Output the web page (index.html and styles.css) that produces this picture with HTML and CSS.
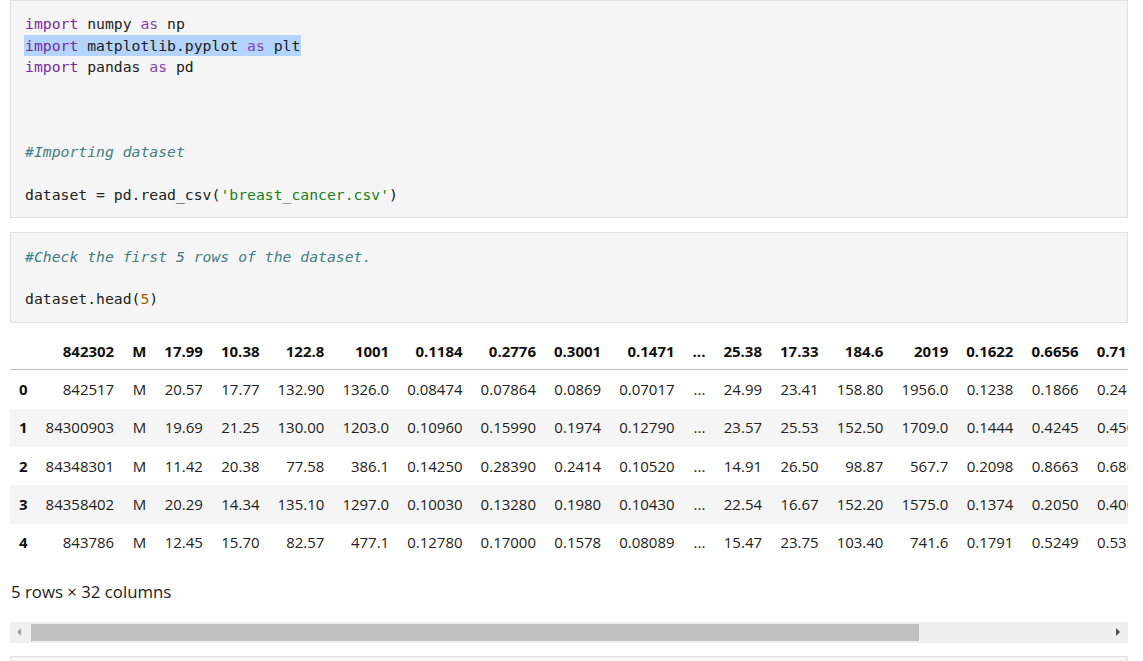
FILE: index.html
```html
<!DOCTYPE html>
<html>
<head>
<meta charset="utf-8">
<link rel="stylesheet" href="styles.css">
</head>
<body>
<div class="page">
  <div class="cell">
<pre class="code"><span class="kw">import</span> numpy <span class="kw2">as</span> np
<span class="sel"><span class="kw">import</span> matplotlib.pyplot <span class="kw2">as</span> plt</span>
<span class="kw">import</span> pandas <span class="kw2">as</span> pd



<span class="cm">#Importing dataset</span>

dataset = pd.read_csv(<span class="str">'breast_cancer.csv'</span>)</pre>
  </div>
  <div class="cell cell2">
<pre class="code"><span class="cm">#Check the first 5 rows of the dataset.</span>

dataset.head(<span class="num">5</span>)</pre>
  </div>
  <div class="output">
    <div class="scroll">
      <table class="df">
        <thead>
          <tr><th></th><th>842302</th><th>M</th><th>17.99</th><th>10.38</th><th>122.8</th><th>1001</th><th>0.1184</th><th>0.2776</th><th>0.3001</th><th>0.1471</th><th>...</th><th>25.38</th><th>17.33</th><th>184.6</th><th>2019</th><th>0.1622</th><th>0.6656</th><th>0.7119</th><th>0.2654</th><th>0.4601</th><th>0.1189</th></tr>
        </thead>
        <tbody>
          <tr><th>0</th><td>842517</td><td>M</td><td>20.57</td><td>17.77</td><td>132.90</td><td>1326.0</td><td>0.08474</td><td>0.07864</td><td>0.0869</td><td>0.07017</td><td>...</td><td>24.99</td><td>23.41</td><td>158.80</td><td>1956.0</td><td>0.1238</td><td>0.1866</td><td>0.2416</td><td>0.1860</td><td>0.2750</td><td>0.08902</td></tr>
          <tr><th>1</th><td>84300903</td><td>M</td><td>19.69</td><td>21.25</td><td>130.00</td><td>1203.0</td><td>0.10960</td><td>0.15990</td><td>0.1974</td><td>0.12790</td><td>...</td><td>23.57</td><td>25.53</td><td>152.50</td><td>1709.0</td><td>0.1444</td><td>0.4245</td><td>0.4504</td><td>0.2430</td><td>0.3613</td><td>0.08758</td></tr>
          <tr><th>2</th><td>84348301</td><td>M</td><td>11.42</td><td>20.38</td><td>77.58</td><td>386.1</td><td>0.14250</td><td>0.28390</td><td>0.2414</td><td>0.10520</td><td>...</td><td>14.91</td><td>26.50</td><td>98.87</td><td>567.7</td><td>0.2098</td><td>0.8663</td><td>0.6869</td><td>0.2575</td><td>0.6638</td><td>0.17300</td></tr>
          <tr><th>3</th><td>84358402</td><td>M</td><td>20.29</td><td>14.34</td><td>135.10</td><td>1297.0</td><td>0.10030</td><td>0.13280</td><td>0.1980</td><td>0.10430</td><td>...</td><td>22.54</td><td>16.67</td><td>152.20</td><td>1575.0</td><td>0.1374</td><td>0.2050</td><td>0.4000</td><td>0.1625</td><td>0.2364</td><td>0.07678</td></tr>
          <tr><th>4</th><td>843786</td><td>M</td><td>12.45</td><td>15.70</td><td>82.57</td><td>477.1</td><td>0.12780</td><td>0.17000</td><td>0.1578</td><td>0.08089</td><td>...</td><td>15.47</td><td>23.75</td><td>103.40</td><td>741.6</td><td>0.1791</td><td>0.5249</td><td>0.5355</td><td>0.1741</td><td>0.3985</td><td>0.12440</td></tr>
        </tbody>
      </table>
      <p class="shape">5 rows × 32 columns</p>
    </div>
    <div class="hbar">
      <span class="arrow left"></span>
      <div class="thumb"></div>
      <span class="arrow right"></span>
    </div>
  </div>
  <div class="cell cell3"></div>
</div>
</body>
</html>
```

FILE: styles.css
```css
html, body {
  margin: 0;
  padding: 0;
  background: #ffffff;
  overflow: hidden;
}

.page {
  width: 1118px;
  margin-left: 10px;
}

.cell {
  background: #f5f5f5;
  border: 1px solid #e0e0e0;
  padding: 12.3px 14px 11.5px;
}

.cell2 {
  margin-top: 14px;
  padding-top: 13px;
  padding-bottom: 12.5px;
}

.cell3 {
  margin-top: 13px;
  height: 20px;
  padding: 0;
}

.code {
  margin: 0;
  font-family: "DejaVu Sans Mono", "Liberation Mono", monospace;
  font-size: 14.75px;
  line-height: 21.33px;
  color: #212121;
  white-space: pre;
}

.kw { color: #7928a1; }
.kw2 { color: #8a3fb2; }
.cm { color: #408080; font-style: italic; }
.str { color: #1a7f1a; }
.num { color: #a65a00; }

.sel {
  display: inline-block;
  background: #b3d4fc;
  margin-left: -1px;
  padding: 0 1px;
}

.output {
  margin-top: 11px;
}

.scroll {
  width: 1118px;
  overflow: hidden;
}

.df {
  border-collapse: collapse;
  font-family: "Open Sans", "Noto Sans", sans-serif;
  font-size: 15px;
  color: #222;
  white-space: nowrap;
}

.df th, .df td {
  text-align: right;
  padding: 8.7px 9px;
  line-height: 21px;
}

.df thead th {
  font-weight: 700;
  color: #111;
  padding-top: 7px;
  padding-bottom: 7px;
  border-bottom: 1px solid #bdbdbd;
}

.df tbody th {
  font-weight: 700;
  color: #111;
  text-align: left;
}

.df tbody tr:nth-child(even) {
  background: #f5f5f5;
}

.shape {
  margin: 19px 0 0;
  font-family: "Open Sans", "Noto Sans", sans-serif;
  font-size: 16.8px;
  line-height: 22px;
  color: #222;
  padding-left: 1px;
}

.hbar {
  margin-top: 19px;
  height: 21px;
  background: #f0f0f0;
  display: flex;
  align-items: center;
  position: relative;
}

.thumb {
  margin-left: 21px;
  width: 888px;
  height: 17px;
  background: #c1c1c1;
}

.arrow {
  position: absolute;
  top: 6px;
  width: 0;
  height: 0;
  border-top: 4px solid transparent;
  border-bottom: 4px solid transparent;
}

.arrow.left {
  left: 7px;
  border-right: 4px solid #a3a3a3;
}

.arrow.right {
  right: 8px;
  border-left: 4px solid #505050;
}
```
